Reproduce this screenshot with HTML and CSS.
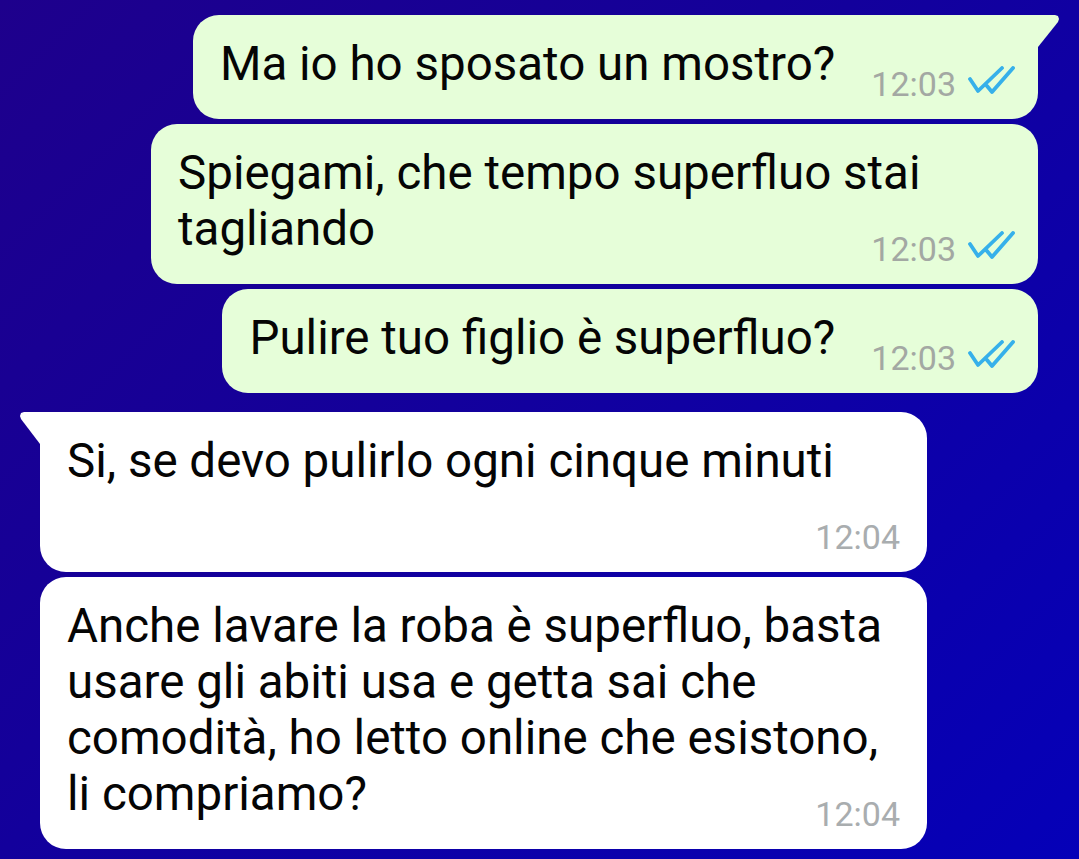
FILE: index.html
```html
<!DOCTYPE html>
<html lang="it">
<head>
    <meta charset="UTF-8">
    <meta name="viewport" content="width=device-width, initial-scale=1.0">
    <title>Chat</title>

    <link rel="stylesheet" href="styles.css">
</head>
<body>

    <div class="chat">
        <!-- messaggi inviati -->
        <div class="msg out tail">
            Ma io ho sposato un mostro? <span class="spacer"></span>
            <span class="meta">12:03
                <svg class="ticks" width="47" height="28" viewBox="0 0 47 28"><path d="M2 13 L10 25 L34 2 M19 20 L24 26 L45 2" /></svg>
            </span>
        </div>

        <div class="msg out wide">
            Spiegami, che tempo superfluo stai<br>tagliando <span class="spacer"></span>
            <span class="meta">12:03
                <svg class="ticks" width="47" height="28" viewBox="0 0 47 28"><path d="M2 13 L10 25 L34 2 M19 20 L24 26 L45 2" /></svg>
            </span>
        </div>

        <div class="msg out">
            Pulire tuo figlio è superfluo? <span class="spacer"></span>
            <span class="meta">12:03
                <svg class="ticks" width="47" height="28" viewBox="0 0 47 28"><path d="M2 13 L10 25 L34 2 M19 20 L24 26 L45 2" /></svg>
            </span>
        </div>

        <!-- messaggi ricevuti -->
        <div class="msg in tail wide first">
            Si, se devo pulirlo ogni cinque minuti <span class="spacer"></span>
            <span class="meta">12:04</span>
        </div>

        <div class="msg in wide">
            Anche lavare la roba è superfluo, basta<br>usare gli abiti usa e getta sai che<br>comodità, ho letto online che esistono,<br>li compriamo? <span class="spacer"></span>
            <span class="meta">12:04</span>
        </div>
    </div>

</body>
</html>
```

FILE: styles.css
```css
*, *::before, *::after {
    box-sizing: border-box;
}

body {
    margin: 0;
    padding: 0;
    height: 859px;
    overflow: hidden;
    font-family: Roboto, "Noto Sans", sans-serif;
    background: linear-gradient(135deg, #1e008c 0%, #14009a 40%, #0500b8 100%);
}

.chat {
    display: flex;
    flex-direction: column;
    gap: 5px;
    padding-top: 15px;
}

.msg {
    position: relative;
    max-width: 887px;
    padding: 21px 23px 27px 27px;
    border-radius: 26px;
    font-size: 47.5px;
    line-height: 56px;
    color: #050505;
}

.msg.wide {
    width: 887px;
}

.msg.out {
    align-self: flex-end;
    margin-right: 41px;
    background-color: #e6fed9;
}

.msg.in {
    align-self: flex-start;
    margin-left: 40px;
    background-color: #ffffff;
}

.msg.first {
    margin-top: 14px;
}

/* codina della nuvoletta */
.msg.tail::before {
    content: "";
    position: absolute;
    top: 0;
    width: 21px;
    height: 32px;
    background: inherit;
}

.msg.out.tail {
    border-top-right-radius: 0;
}

.msg.out.tail::before {
    right: -21px;
    clip-path: polygon(0 0, 17px 0, 20px 1px, 21px 4px, 20px 7px, 0 32px);
}

.msg.in.tail {
    border-top-left-radius: 0;
}

.msg.in.tail::before {
    left: -20px;
    width: 20px;
    clip-path: polygon(20px 0, 4px 0, 1px 1px, 0 4px, 1px 7px, 20px 32px);
}

.spacer {
    display: inline-block;
    width: 168px;
    height: 1px;
}

.msg.in .spacer {
    width: 110px;
}

.meta {
    position: absolute;
    right: 23px;
    bottom: 18px;
    display: flex;
    align-items: flex-end;
    font-size: 34px;
    line-height: 34px;
    color: #a3a8a3;
}

.msg.in .meta {
    right: 27px;
    color: #a9adaf;
}

.ticks {
    margin-left: 12px;
    margin-bottom: 7px;
    fill: none;
    stroke: #36b0ea;
    stroke-width: 3.8;
    stroke-linecap: round;
    stroke-linejoin: round;
}
```
